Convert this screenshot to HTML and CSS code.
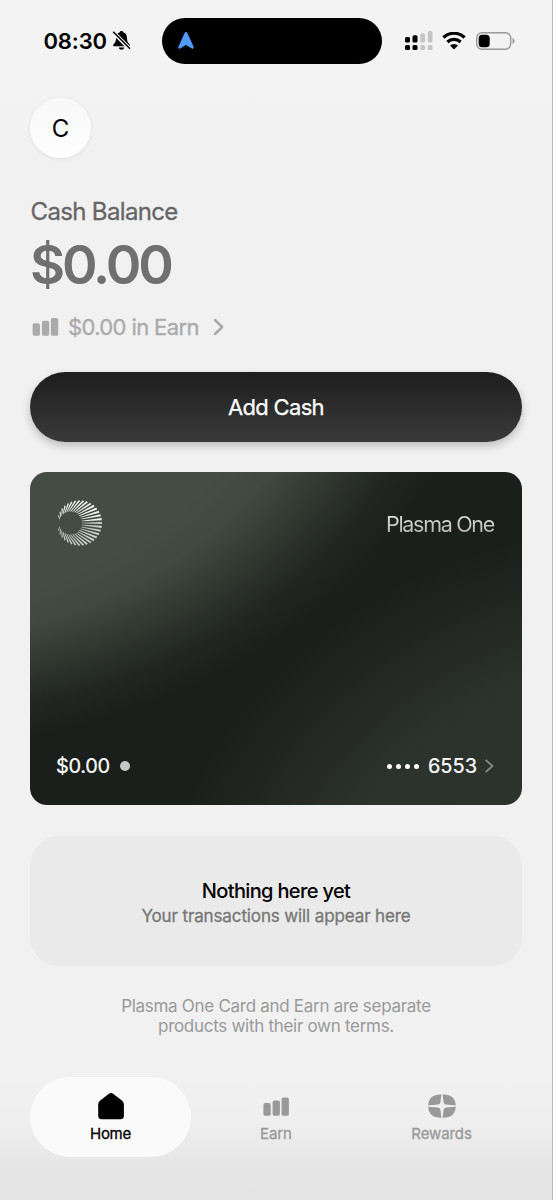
FILE: index.html
```html
<!DOCTYPE html>
<html lang="en">
<head>
<meta charset="utf-8">
<title>Plasma One</title>
<link rel="stylesheet" href="styles.css">
</head>
<body>
<div class="screen">
  <header class="status">
    <div class="clock"><span class="time">08:30</span>
      <svg class="bell" width="19" height="21" viewBox="0 0 19 21"><path d="M9.500 1c-1 0-1.800.6-2 1.500C5 3.300 4 5.500 4 8c0 3.500-.8 4.500-2.400 6.200-.9 1-.5 2 .6 2h14.600c1.100 0 1.500-1 .6-2C15.800 12.500 15 11.500 15 8c0-2.500-1-4.700-3.500-5.500C11.300 1.600 10.500 1 9.500 1zM6.800 17.600h5.400c-.3 1.500-1.400 2.200-2.700 2.200s-2.400-.7-2.700-2.200z"/><path class="slash-gap" d="M1 2l17 17"/><path class="slash" d="M1.200 1.700l16.800 17"/></svg>
    </div>
    <div class="island"><svg width="18" height="19" viewBox="0 0 18 19"><path d="M7.700 1.800c.5-1.200 2.100-1.200 2.600 0l6.300 14c.6 1.300-.5 2.300-1.700 1.600l-4.600-2.700c-.8-.5-1.800-.5-2.600 0l-4.600 2.700c-1.200.7-2.300-.3-1.700-1.600z"/></svg></div>
    <div class="signals">
      <svg width="28" height="20" viewBox="0 0 28 20"><g><rect x="0" y="6" width="5" height="5.500" rx="1.500"/><rect x="7.500" y="4.200" width="5" height="7.300" rx="1.500"/><rect x="0" y="14" width="5" height="5" rx="1.500"/><rect x="7.500" y="14" width="5" height="5" rx="1.500"/></g><g class="weak"><rect x="15.300" y="2.200" width="4.700" height="9.300" rx="1.500"/><rect x="22.800" y="0" width="4.700" height="11.500" rx="1.500"/><rect x="15.300" y="14" width="4.700" height="5" rx="1.500"/><rect x="22.800" y="14" width="4.700" height="5" rx="1.500"/></g></svg>
      <svg class="wifi" width="24" height="18" viewBox="0 0 24 18"><path class="arc" d="M1.400 5.500a15.400 15.400 0 0 1 21.200 0M5.400 10a9.600 9.600 0 0 1 13.200 0"/><path d="M12 17.500l-4-3.900a5.800 5.800 0 0 1 8 0z"/></svg>
      <svg class="battery" width="39" height="18" viewBox="0 0 39 18"><rect class="shell" x=".7" y=".7" width="34" height="16.600" rx="5.200"/><rect x="2.700" y="2.700" width="11" height="12.600" rx="3.500"/><path class="tip" d="M36.500 6c2.700.7 2.700 5.300 0 6z"/></svg>
    </div>
  </header>

  <main class="content">
    <div class="avatar">C</div>
    <section class="balance">
      <div class="balance-label">Cash Balance</div>
      <div class="balance-value">$0.00</div>
      <div class="earn-line">
        <svg width="27" height="20" viewBox="0 0 27 20"><rect x=".6" y="6.300" width="7.300" height="12.500" rx="1.900"/><rect x="9.900" y="3.800" width="7.300" height="15" rx="1.900"/><rect x="18.900" y=".9" width="7.300" height="17.900" rx="1.900"/></svg>
        <span>$0.00 in Earn</span>
        <svg class="chev" width="11" height="18" viewBox="0 0 11 18"><path d="M2 2l7.200 7L2 16"/></svg>
      </div>
    </section>
    <button class="add">Add Cash</button>
    <section class="card">
      <div class="card-row">
        <svg class="logo" width="48" height="48" viewBox="-24 -24 48 48" id="sunburst"></svg>
        <span class="brand">Plasma One</span>
      </div>
      <div class="card-row">
        <div class="card-balance"><span>$0.00</span><i class="dot"></i></div>
        <div class="card-number"><span class="mask"><i></i><i></i><i></i><i></i></span><span>6553</span><svg class="chev" width="9" height="14" viewBox="0 0 9 14"><path d="M1.200 1.500l6.300 5.500-6.300 5.500"/></svg></div>
      </div>
    </section>
    <section class="empty">
      <div class="empty-title">Nothing here yet</div>
      <div class="empty-text">Your transactions will appear here</div>
    </section>
    <p class="terms">Plasma One Card and Earn are separate<br>products with their own terms.</p>
  </main>

  <nav class="tabs">
    <a class="tab active"><svg width="28" height="28" viewBox="0 0 28 28"><path d="M11.900 1.700q2.100-1.600 4.200 0l8.800 6.800q2 1.600 2 3.700v11.600q0 3.500-3.500 3.500H4.700q-3.500 0-3.500-3.500V12.200q0-2.100 2-3.700z"/></svg><span class="home">Home</span></a>
    <a class="tab"><svg width="28" height="28" viewBox="0 0 28 28"><rect x="1.400" y="11.100" width="7.300" height="12.700" rx="1.900"/><rect x="10.600" y="8.400" width="7.300" height="15.400" rx="1.900"/><rect x="19.600" y="5.600" width="7.300" height="18.200" rx="1.900"/></svg><span class="earn">Earn</span></a>
    <a class="tab"><svg width="28" height="28" viewBox="0 0 28 28"><path d="M13.400 2.500C5 2.300.7 5.800.2 13.400l10-.8q1.900-.2 2.200-2.200zM14.600 2.500c8.400-.2 12.700 3.300 13.200 10.900l-10-.8q-1.900-.2-2.200-2.200zM13.400 25.700C5 25.900.7 22.400.2 14.800l10 .8q1.900.2 2.200 2.200zM14.600 25.700c8.400.2 12.700-3.300 13.200-10.900l-10 .8q-1.900.2-2.200 2.200z"/></svg><span class="rewards">Rewards</span></a>
  </nav>
</div>
<script src="logo.js"></script>
</body>
</html>
```

FILE: styles.css
```css
* { box-sizing: border-box; }
body { margin: 0; font-family: Inter, "Liberation Sans", sans-serif; color: #000; }
svg { display: block; flex: none; }
.screen {
  display: flex; flex-direction: column; width: 553px; height: 1200px; padding: 0 30px; overflow: hidden;
  border-right: 1px solid #b9b9b9;
  background: linear-gradient(#f3f3f3, #f3f3f3 80px, #f1f1f1 180px, #f1f1f1 1070px, #efefef 1120px, #e6e6e6 1165px, #e4e4e4);
}
.status { display: flex; align-items: center; height: 46px; margin-top: 17.500px; }
.clock { display: flex; align-items: center; gap: 4px; width: 132px; padding-left: 13.500px; }
.time { font-size: 22px; font-weight: 600; letter-spacing: -.15px; width: 64px; white-space: nowrap; }
.slash { stroke: #000; stroke-width: 1.500; fill: none; }
.slash-gap { stroke: #f3f3f3; stroke-width: 4; fill: none; }
.island { width: 220px; height: 46px; border-radius: 23px; background: #000; padding: 13px 15px; fill: #519bf7; }
.signals { display: flex; align-items: center; margin-left: 23px; }
.weak { fill: #c5c5c5; }
.wifi { margin-left: 9px; }
.arc { fill: none; stroke: #000; stroke-width: 3.200; }
.battery { margin-left: 10px; }
.shell { fill: none; stroke: #999; stroke-width: 1.400; }
.tip { fill: #999; }
.avatar {
  width: 61px; height: 60px; margin-top: 34.500px; border-radius: 50%; display: grid; place-items: center;
  background: linear-gradient(#f8f8f8, #fefefe); box-shadow: 0 1px 4px rgba(0,0,0,.08); font-size: 24px;
}
.balance-label { margin-top: 39px; padding-left: .5px; font-size: 24px; line-height: 30px; font-weight: 400; -webkit-text-stroke: .3px #666; letter-spacing: -.65px; color: #666; }
.balance-value { font-size: 54px; line-height: 60px; margin-top: 8px; font-weight: 560; letter-spacing: -3.100px; color: #707070; }
.earn-line { display: flex; align-items: center; height: 30px; margin-top: 17px; padding-left: 2px; font-size: 22px; font-weight: 400; -webkit-text-stroke: .3px #aaa; letter-spacing: -.62px; color: #aaa; fill: #aaa; }
.earn-line span { margin-left: 9px; width: 131px; white-space: nowrap; }
.chev { fill: none; stroke: #aaa; stroke-width: 2.500; stroke-linecap: round; stroke-linejoin: round; }
.earn-line .chev { margin-left: 14px; }
.add {
  display: block; width: 492px; height: 70px; margin-top: 30px; padding: 0; border: 0; border-radius: 35px;
  background: linear-gradient(#1e1e1e, #3a3a3a); box-shadow: 0 4px 8px rgba(0,0,0,.22);
  color: #fff; font: 400 22px Inter, sans-serif; -webkit-text-stroke: .25px #fff; letter-spacing: -.7px;
}
.card {
  display: flex; flex-direction: column; justify-content: space-between; width: 492px; height: 333px; margin-top: 30px;
  border-radius: 17px; padding: 27px 28px 25px 26px; color: #fff;
  background:
    radial-gradient(580px 420px at -150px -150px, #434c44 0%, #444d44 68%, #414941 76%, #30372f 86%, #222722 94%, rgba(27,31,27,0) 102%),
    radial-gradient(520px 434px at 642px 483px, #2d342d 0%, #2c322c 68%, rgba(27,31,27,0) 100%),
    #1b1f1b;
}
.card-row { display: flex; align-items: center; justify-content: space-between; }
.brand { position: relative; top: 1px; font-size: 21.500px; line-height: 28px; letter-spacing: -1.300px; padding-right: 2px; margin-right: -2px; background: linear-gradient(#f0f0f0, #aaa); background-clip: text; color: transparent; }
.card-balance, .card-number { display: flex; align-items: center; font-size: 20px; font-weight: 400; -webkit-text-stroke: .2px #fff; line-height: 28px; letter-spacing: -.3px; }
.card-number { letter-spacing: 0; }
.dot { width: 10px; height: 10px; margin-left: 10px; border-radius: 50%; background: #c8c8c8; }
.mask { display: flex; gap: 4px; margin-right: 9px; }
.mask i { width: 5px; height: 5px; border-radius: 50%; background: #fff; }
.card-number .chev { margin-left: 8px; stroke: #858985; stroke-width: 1.800; }
.empty { height: 130px; width: 492px; margin-top: 31px; padding-top: 42px; border-radius: 29px; background: #eaeaea; text-align: center; }
.empty-title { font-size: 20px; line-height: 26px; font-weight: 500; letter-spacing: -.65px; }
.empty-text { font-size: 17px; line-height: 24px; font-weight: 400; -webkit-text-stroke: .3px #777; letter-spacing: -.12px; color: #777; }
.terms { width: 492px; margin: 30px 0 0; text-align: center; font-size: 17px; line-height: 20px; letter-spacing: -.29px; color: #999; }
.tabs { display: flex; justify-content: space-between; width: 492px; margin-top: 41px; }
.tab { display: flex; flex-direction: column; align-items: center; width: 161px; height: 80px; padding-top: 14.500px; border-radius: 40px; font-size: 15px; line-height: 20px; font-weight: 400; -webkit-text-stroke: .3px #999; letter-spacing: -.1px; color: #999; fill: #999; }
.tab span { margin-top: 4px; }
.active { background: #fafafa; color: #000; fill: #000; -webkit-text-stroke-color: #000; letter-spacing: -.3px; }
.tab svg { -webkit-text-stroke: 0; }
```

FILE: logo.js
```js
// Tapered rays joining an offset inner circle to the outer rim.
const logo = document.getElementById("sunburst");
const count = 36;
for (let i = 0; i < count; i++) {
  const a = i * 2 * Math.PI / count;
  if (Math.abs(a - Math.PI) < 0.3) continue;
  const x = -0.5 + 22.500 * Math.cos(a), y = 22.500 * Math.sin(a);
  const u = -9.500 + 11.500 * Math.cos(a), v = 11.500 * Math.sin(a);
  const len = Math.hypot(x - u, y - v);
  const nx = (v - y) / len, ny = (x - u) / len;
  const k = 0.35 + 0.75 * len / 20, j = 0.3;
  const p = document.createElementNS("http://www.w3.org/2000/svg", "polygon");
  p.setAttribute("points", [[x + nx * k, y + ny * k], [x - nx * k, y - ny * k], [u - nx * j, v - ny * j], [u + nx * j, v + ny * j]].join(" "));
  p.setAttribute("fill", y < 0 ? "#f2f4f2" : "#cbd0cb");
  logo.appendChild(p);
}
```
